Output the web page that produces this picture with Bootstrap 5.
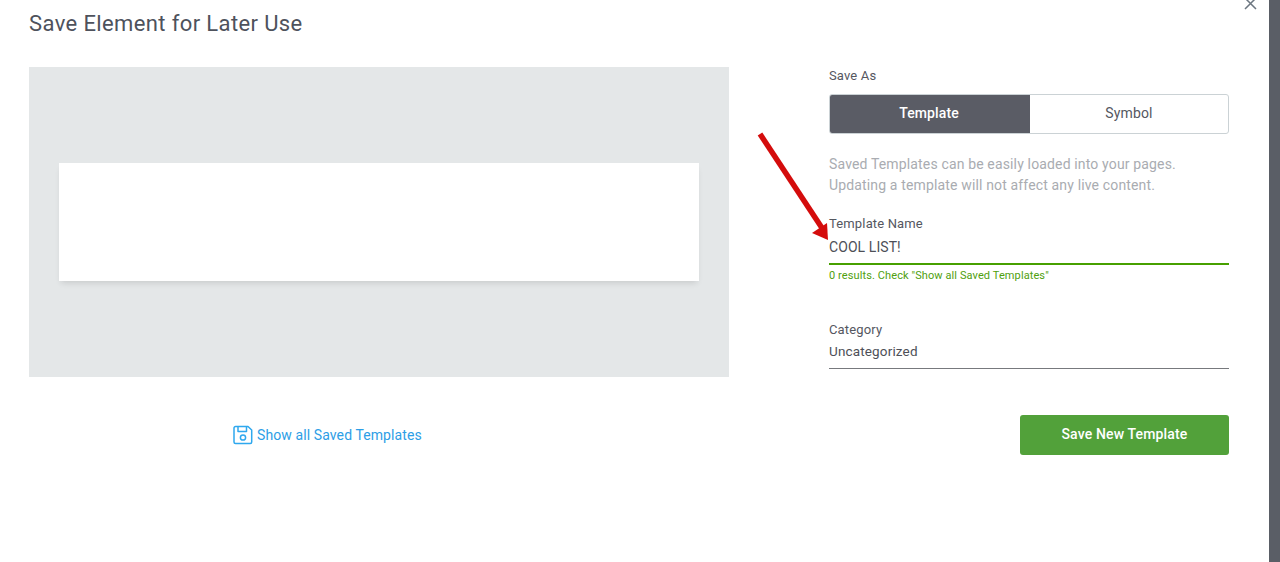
<!DOCTYPE html>
<html lang="en">
<head>
<meta charset="utf-8">
<title>Save Element</title>
<link rel="stylesheet" href="https://cdn.jsdelivr.net/npm/bootstrap@5.3.0/dist/css/bootstrap.min.css">
<style>
html,body{height:100%;overflow:hidden;background:#fff}
body{font-family:Roboto,"Liberation Sans",sans-serif;color:#4d4f57}
.shell{height:562px;position:relative}
.sheet{width:1269px;height:562px;padding:0 40px 0 29px;position:relative}
.side-strip{width:11px;background:#5a5e66}
.modal-title-text{font-size:22px;line-height:28px;font-weight:400;color:#4e525c;margin:10px 0 29px;letter-spacing:.38px}
.left-pane{width:700px}
.right-pane{width:400px;margin-left:100px}
.preview{height:310px;background:#e4e7e8;padding:0 30px}
.preview-card{height:118px;background:#fff;box-shadow:0 4px 6px -2px rgba(0,0,0,.12)}
.saved-link{margin:48px 0 0 204px;color:#2d9ee6;font-size:14px;line-height:20px;text-decoration:none;letter-spacing:.1px}
.lbl{font-size:13px;line-height:18px;color:#55575f;letter-spacing:.15px}
.seg{height:40px;margin-top:9px;border:1px solid #cbd2d5;border-radius:3px;overflow:hidden}
.seg-btn{flex:1 1 0;display:flex;align-items:center;justify-content:center;font-size:14px;color:#55575f;letter-spacing:.15px;padding-bottom:2px}
.seg-on{flex:0 0 200px;background:#5a5c65;color:#fff;font-weight:500;letter-spacing:.1px;padding-right:2px}
.help{margin:20px 0 0;font-size:14px;line-height:21px;color:#a9acb1;letter-spacing:.15px}
.field-name{margin-top:19px}
.field-val{font-size:13.5px;line-height:20px;color:#4d4f57;letter-spacing:.15px}
.underline-green{font-size:14px;letter-spacing:.08px;border-bottom:2px solid #47a000;padding:4px 0 6px}
.underline-grey{border-bottom:1px solid #77797d;padding:2px 0 7px}
.hint{font-size:11px;line-height:14px;color:#4fa00e;margin-top:4px;letter-spacing:.1px}
.field-cat{margin-top:38px}
.btn-save{width:209px;height:40px;padding:0 0 2px;background:#52a13a;color:#fff;border:0;border-radius:3px;font-size:14px;font-weight:500;margin-top:46px;letter-spacing:.15px}
.btn-save:hover{background:#52a13a;color:#fff}
.close-x{position:absolute;left:1244px;top:-3px;width:13px;height:13px}
.arrow{position:absolute;left:753px;top:130px;width:80px;height:116px}
</style>
</head>
<body>
<div class="shell d-flex">
  <div class="sheet">
    <svg class="close-x" viewBox="0 0 13 13"><path d="M1 1 12 12M12 1 1 12" stroke="#6c7680" stroke-width="1.5" fill="none"/></svg>
    <h1 class="modal-title-text">Save Element for Later Use</h1>
    <div class="d-flex">
      <div class="left-pane">
        <div class="preview d-flex align-items-center"><div class="preview-card w-100"></div></div>
        <a class="saved-link d-inline-flex align-items-center gap-1" href="#">
          <svg width="20" height="20" viewBox="0 0 20 20" fill="none" stroke="#2fa8ee" stroke-width="1.5" stroke-linejoin="round"><path d="M2.5 1.5H15L18.7 5V17a1.5 1.5 0 0 1-1.5 1.5H2.5A1.5 1.5 0 0 1 1 17V3a1.5 1.5 0 0 1 1.5-1.5Z"/><path d="M5 1.7V6.5H13.5V1.7"/><circle cx="10" cy="12.5" r="2.6"/></svg>
          <span>Show all Saved Templates</span>
        </a>
      </div>
      <div class="right-pane">
        <div class="lbl">Save As</div>
        <div class="seg d-flex">
          <div class="seg-btn seg-on">Template</div>
          <div class="seg-btn">Symbol</div>
        </div>
        <p class="help">Saved Templates can be easily loaded into your pages.<br>Updating a template will not affect any live content.</p>
        <div class="field-name">
          <div class="lbl">Template Name</div>
          <div class="field-val underline-green">COOL LIST!</div>
          <div class="hint">0 results. Check "Show all Saved Templates"</div>
        </div>
        <div class="field-cat">
          <div class="lbl">Category</div>
          <div class="field-val underline-grey">Uncategorized</div>
        </div>
        <div class="d-flex justify-content-end">
          <button type="button" class="btn btn-save">Save New Template</button>
        </div>
      </div>
    </div>
    <svg class="arrow" viewBox="0 0 80 116"><path d="M7 4 69 98" stroke="#d40c0c" stroke-width="5.5" fill="none"/><path d="M59 103 74 93 75 110Z" fill="#d40c0c"/></svg>
  </div>
  <div class="side-strip flex-grow-1"></div>
</div>
<script src="https://cdn.jsdelivr.net/npm/bootstrap@5.3.0/dist/js/bootstrap.bundle.min.js"></script>
</body>
</html>
